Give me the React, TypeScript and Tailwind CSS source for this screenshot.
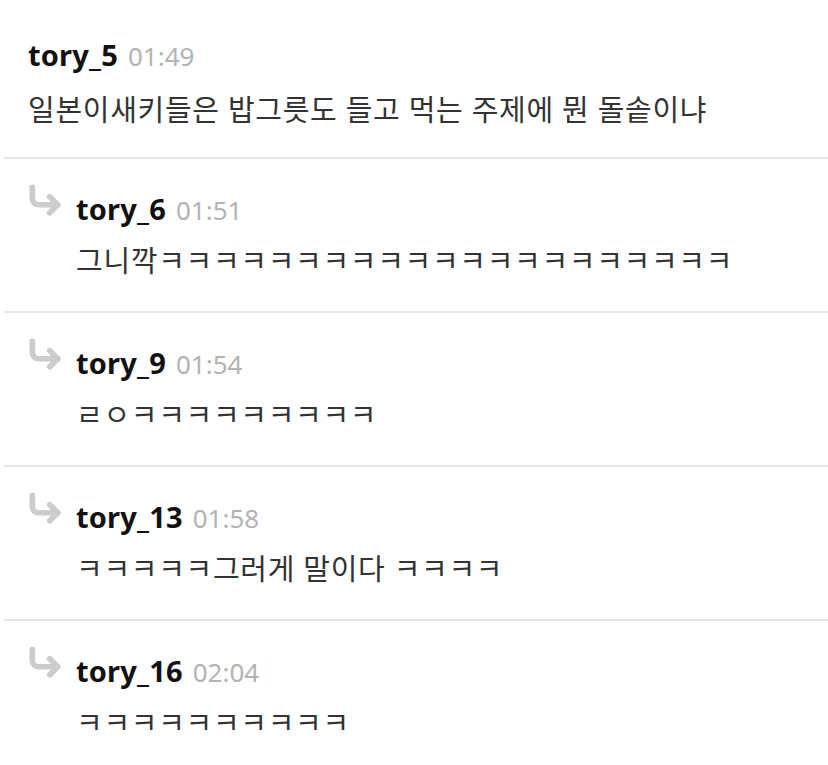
import { CornerDownRight } from "lucide-react";

type Reply = {
  name: string;
  time: string;
  body: string;
};

const replies: Reply[] = [
  { name: "tory_6", time: "01:51", body: "그니깍ㅋㅋㅋㅋㅋㅋㅋㅋㅋㅋㅋㅋㅋㅋㅋㅋㅋㅋㅋㅋㅋ" },
  { name: "tory_9", time: "01:54", body: "ㄹㅇㅋㅋㅋㅋㅋㅋㅋㅋㅋ" },
  { name: "tory_13", time: "01:58", body: "ㅋㅋㅋㅋㅋ그러게 말이다 ㅋㅋㅋㅋ" },
  { name: "tory_16", time: "02:04", body: "ㅋㅋㅋㅋㅋㅋㅋㅋㅋㅋ" },
];

const font = { fontFamily: '"Noto Sans", "Noto Sans CJK KR", sans-serif' };

function Meta({ name, time }: { name: string; time: string }) {
  return (
    <div className="flex items-baseline gap-[10px] h-[40px] leading-[40px]">
      <span className="text-[29px] font-bold text-[#111] tracking-[0.2px]">{name}</span>
      <span className="text-[26px] text-[#b3b3b3]">{time}</span>
    </div>
  );
}

function Divider() {
  return <div className="ml-[4px] h-[2px] bg-[#e6e6e6]" />;
}

export default function App() {
  return (
    <div className="w-[828px] min-h-[765px] bg-white" style={font}>
      {/* Original comment */}
      <div className="pl-[28px] pt-[35px] pb-[27px]">
        <Meta name="tory_5" time="01:49" />
        <p className="mt-[15px] h-[40px] leading-[40px] text-[29px] tracking-[0.7px] text-[#333]">
          일본이새키들은 밥그릇도 들고 먹는 주제에 뭔 돌솥이냐
        </p>
      </div>

      {/* Replies */}
      {replies.map((r, i) => (
        <div key={r.name}>
          <Divider />
          <div className={`flex pt-[22px] ${i === replies.length - 1 ? "pb-[20px]" : "pb-[30px]"}`}>
            <div className="w-[76px] pl-[26px] shrink-0">
              <CornerDownRight size={38} strokeWidth={3.6} color="#cccccc" />
            </div>
            <div className="pt-[8px]">
              <Meta name={r.name} time={r.time} />
              <p className="mt-[12px] h-[40px] leading-[40px] text-[29px] tracking-[0.7px] text-[#333]">
                {r.body}
              </p>
            </div>
          </div>
        </div>
      ))}
    </div>
  );
}
